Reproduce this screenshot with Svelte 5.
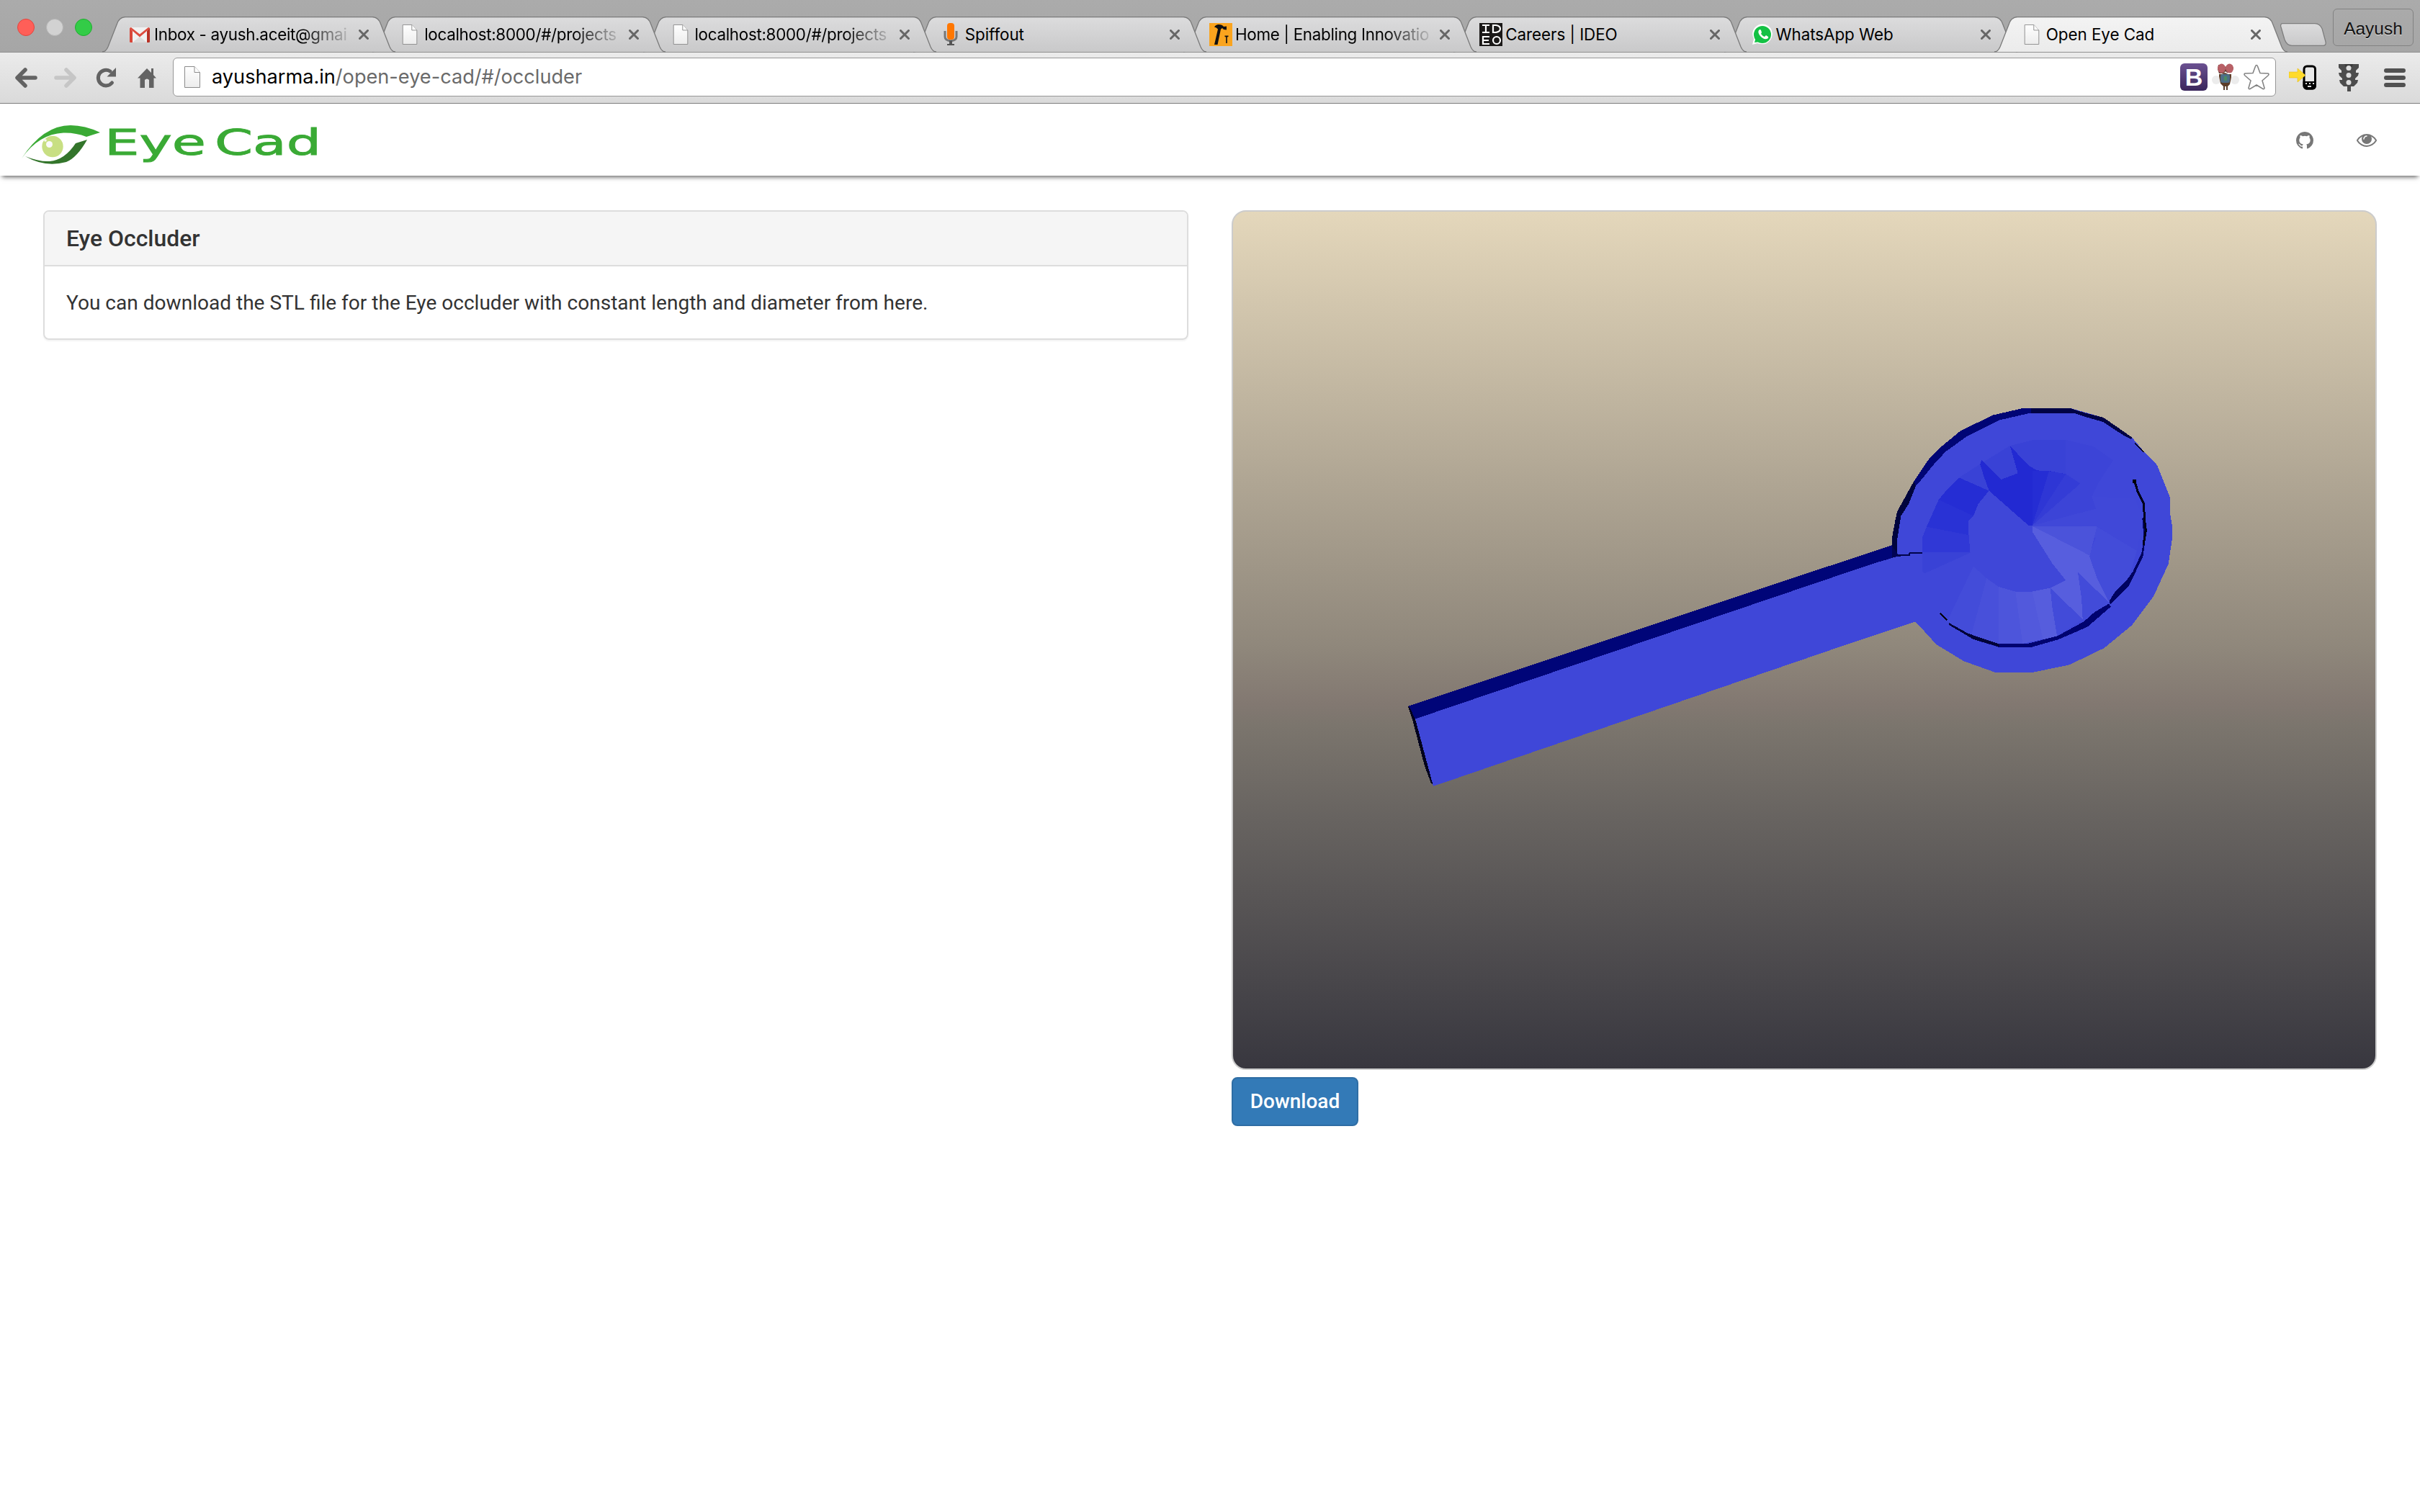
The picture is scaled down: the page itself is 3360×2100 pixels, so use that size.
<script>
  const tabs = [
    { icon: 'gmail', title: 'Inbox - ayush.aceit@gmai', faded: true },
    { icon: 'file', title: 'localhost:8000/#/projects', faded: true },
    { icon: 'file', title: 'localhost:8000/#/projects', faded: true },
    { icon: 'mic', title: 'Spiffout' },
    { icon: 'hammer', title: 'Home | Enabling Innovatio', faded: true },
    { icon: 'ideo', title: 'Careers | IDEO' },
    { icon: 'whatsapp', title: 'WhatsApp Web' },
    { icon: 'file', title: 'Open Eye Cad', active: true }
  ];
</script>

{#snippet fileIcon()}
  <svg class="file" viewBox="0 0 22 30">
    <path d="M.5.5h13.5l7.5 8v21H.5z" fill="url(#paper)" stroke="#8b8b8b" />
    <path d="M14 .5v8h7.5" fill="#fff" stroke="#8b8b8b" />
  </svg>
{/snippet}

{#snippet favicon(name)}
  {#if name === 'gmail'}
    <svg viewBox="0 0 32 32">
      <path d="M2 6h28v21H2z" fill="#f1f1f1" />
      <path d="M6 27l10-8 10 8z" fill="#dcdcdc" />
      <path d="M2 7.500q0-1.500 2-1.500l12 9.500L28 6q2 0 2 1.500L16 19.500z" fill="#dd4b3e" />
      <path d="M2 7l4 4v16H3q-1 0-1-1z" fill="#d8473a" />
      <path d="M30 7l-4 4v16h3q1 0 1-1z" fill="#b93226" />
    </svg>
  {:else if name === 'mic'}
    <svg viewBox="0 0 32 32">
      <path d="M8 11v8q0 5 8 6 8-1 8-6v-8" fill="none" stroke="#777" stroke-width="3" />
      <rect x="11" y="0" width="10" height="23" rx="4" fill="#f70" />
      <path d="M14 24h4v5h3v2H11v-2h3z" fill="#555" />
    </svg>
  {:else if name === 'hammer'}
    <svg viewBox="0 0 32 32">
      <path d="M0 0h32v32H0z" fill="#faa41e" />
      <path d="M7 5.500q2-3.500 6-3.500 5 0 7 3l4-.500v5l-4-.500-2-2-2 1.500-4.500 21.500H7L12 8.500q-2-2.500-5-3zM21.500 17.500h5v1.500l-1.700.500V28h-1.600v-8.500l-1.700-.500z" fill="#111" />
    </svg>
  {:else if name === 'ideo'}
    <svg viewBox="0 0 32 32">
      <path d="M0 0h32v32H0z" fill="#1b1918" />
      <g fill="none" stroke="#fff" stroke-width="2.200">
        <path d="M4 3h10M4 13h10M9 3v10M19 3h4q6 1 6 5t-6 5h-4zM14 19H5v10h9M5 24h8" />
        <circle cx="24" cy="24" r="5" />
      </g>
    </svg>
  {:else if name === 'whatsapp'}
    <svg viewBox="0 0 32 32">
      <path d="M3 30l2-8Q1 13 6 7q6-7 15-5 9 3 10 13-1 10-10 14-6 1-11-1z" fill="#fff" />
      <circle cx="17" cy="16" r="12" fill="#13c144" />
      <path d="M6 27l2-7 6 6z" fill="#13c144" />
      <path d="M12 10q2-2 3 0l1 3-1 2q2 3 5 4l2-2 3 2q1 2-2 3-5 1-9-4-4-5-2-8z" fill="#fff" />
    </svg>
  {:else}
    {@render fileIcon()}
  {/if}
{/snippet}

<svg class="defs" width="0" height="0">
  <defs>
    <linearGradient id="paper" x2="0" y2="1"><stop stop-color="#fff" /><stop offset="1" stop-color="#ececec" /></linearGradient>
    <linearGradient id="tabFill" x2="0" y2="1"><stop stop-color="#dcdcdd" /><stop offset="1" stop-color="#c9c9ca" /></linearGradient>
    <linearGradient id="activeFill" x2="0" y2="1"><stop stop-color="#f3f3f3" /><stop offset="1" stop-color="#ebebeb" /></linearGradient>
  </defs>
</svg>

<div class="browser">
  <div class="strip">
    <div class="lights"><i class="red"></i><i class="grey"></i><i class="green"></i></div>
    <div class="tabs">
      {#each tabs as tab, i}
        <div class="tab" style="z-index: {tab.active ? 20 : 10 - i}">
          <svg class="shape" viewBox="0 0 407 50">
            <path d="M0 49q5 0 8-7L20.500 10Q23.500 1 32 .500H375q8.500.500 11.500 9.500L399 42q3 7 8 7z" fill={tab.active ? 'url(#activeFill)' : 'url(#tabFill)'} />
            <path d="M0 49q5 0 8-7L20.500 10Q23.500 1 32 .500H375q8.500.500 11.500 9.500L399 42q3 7 8 7" fill="none" stroke="#7a7a7a" stroke-width="1.300" />
          </svg>
          <span class="fav">{@render favicon(tab.icon)}</span>
          <span class="title" class:faded={tab.faded}>{tab.title}</span>
          <svg class="close" viewBox="0 0 14 14"><path d="M1.500 1.500l11 11M12.500 1.500l-11 11" stroke="#666" stroke-width="3" stroke-linecap="round" /></svg>
        </div>
      {/each}
    </div>
    <svg class="newtab" viewBox="0 0 64 32">
      <path d="M3 .700H48q7 .300 10 7L63 26q1 5-3 5.300H16Q9 31 6 23L.800 5Q0 1 3 .700z" fill="url(#tabFill)" stroke="#7d7d7d" stroke-width="1.300" />
    </svg>
    <div class="profile">Aayush</div>
  </div>

  <div class="toolbar">
    <div class="nav">
      <svg class="arrow" viewBox="0 0 32 28"><path d="M29 14H5M15 3L4 14l11 11" fill="none" stroke="#636363" stroke-width="5.500" stroke-linecap="round" stroke-linejoin="round" /></svg>
      <svg class="arrow" viewBox="0 0 32 28"><path d="M3 14h24M17 3l11 11-11 11" fill="none" stroke="#c6c6c6" stroke-width="5.500" stroke-linecap="round" stroke-linejoin="round" /></svg>
      <svg class="reload" viewBox="0 0 28 28"><path d="M22.500 21A10.800 10.800 0 1 1 20 5" fill="none" stroke="#636363" stroke-width="5" stroke-linecap="round" /><path d="M28 0v12.500H15.500z" fill="#636363" /></svg>
      <svg class="home" viewBox="0 0 26 28"><path d="M13 1l6 6V1h3v9l4 4.500h-3.500V28H16V17q-3-3-6 0v11H3.500V14.500H0z" fill="#636363" /></svg>
    </div>
    <div class="omnibox">
      {@render fileIcon()}
      <span class="url"><b>ayusharma.in</b>/open-eye-cad/#/occluder</span>
      <div class="actions">
        <div class="bootstrap">B</div>
        <svg class="bug" viewBox="0 0 38 38">
          <circle cx="6" cy="23" r="6" fill="#ececec" /><circle cx="32" cy="23" r="6" fill="#ececec" />
          <path d="M10 15h4l4-2 5 2h4v4l-2 10-3 3h-6l-4-4-2-10z" fill="#5c3d29" />
          <rect x="12" y="15" width="13" height="12" rx="3" fill="#4d6e86" />
          <path d="M17 18h4v6h-4z" fill="#4c8b62" />
          <path d="M9 2h7l3 3 3-3h6l2 5-3 6h-6l-2-2-3 3h-6L8 8z" fill="#5b3528" />
          <ellipse cx="13.500" cy="7" rx="5.500" ry="6.500" fill="#b86066" /><ellipse cx="24.500" cy="7" rx="5.500" ry="6.500" fill="#b86066" />
          <path d="M17 32v5M21 32v5" stroke="#57402f" stroke-width="2" />
        </svg>
        <svg class="star" viewBox="0 0 36 36"><path d="M18 1.500q1 0 1.500 1.500l3.500 9.500 11 .500q2 1 0 3l-8 7 3 10q0 2-2 1.500L18 29l-9 5.500q-2 .500-2-1.500l3-10-8-7q-2-2 0-3l11-.500L16.500 3q.500-1.500 1.500-1.500z" fill="#fff" stroke="#848484" stroke-width="1.600" /></svg>
      </div>
    </div>
    <div class="extensions">
      <svg class="ext" viewBox="0 0 38 38">
        <rect x="21" y="3" width="15.500" height="31" rx="4" fill="#e8e8e8" stroke="#000" stroke-width="3" />
        <path d="M19.500 24H38v7q-1 4-5 4.500h-9q-4-1-4.500-5z" fill="#000" />
        <path d="M23 27h2M28 27h2M33 27h2M26 31h5" stroke="#ddd" stroke-width="2" />
        <path d="M0 11h12V6l11 9.500L12 25v-6H0z" fill="#ffdb2c" stroke="#e5bd15" stroke-width=".600" />
      </svg>
      <svg class="ext" viewBox="0 0 38 38">
        <path d="M5 0h28v5l-4 4v3h4l-1 4-4 4v2h4l-1 4-5 5h-4v7h-5v-7h-5l-5-5-1-4h4v-2l-4-4-1-4h4V9L5 5z" fill="#4c4c4c" />
        <path d="M13 0h12v1l-2 3h-8z" fill="#3a3a3a" />
        <circle cx="19" cy="5.500" r="3.500" fill="#ddd" /><circle cx="19" cy="15.500" r="3.500" fill="#ddd" /><circle cx="19" cy="25.500" r="3.500" fill="#ddd" />
      </svg>
      <svg class="menu" viewBox="0 0 30 26"><path d="M3 3h24M3 13h24M3 23h24" stroke="#515151" stroke-width="6" stroke-linecap="round" /></svg>
    </div>
  </div>
</div>

<header>
  <svg class="logo" viewBox="30 170 420 60">
    <path d="M30 220Q60 174 98 174q20 0 41 10l-19 6q-15-6-32-5.500Q54 186 30 220z" fill="#3aaa35" />
    <path d="M35 217q20 8 34 7 21-2 36-25l16-5q-14 25-29 31-30 8-57-8z" fill="#33752b" />
    <circle cx="73" cy="203.500" r="14.700" fill="#c8df83" />
    <circle cx="68.500" cy="200.500" r="4.500" fill="#fafafa" /><circle cx="63" cy="195" r="1.800" fill="#fafafa" />
    <text x="145" y="214.500" textLength="141" lengthAdjust="spacingAndGlyphs">Eye</text>
    <text x="298" y="214.500" textLength="148" lengthAdjust="spacingAndGlyphs">Cad</text>
  </svg>
  <nav>
    <svg class="github" viewBox="128 128 1536 1536"><path d="M896 128q209 0 385.500 103t279.500 279.500 103 385.500q0 251-146.500 451.500t-378.500 277.500q-27 5-40-7t-13-30q0-3 .500-76.500t.500-134.500q0-97-52-142 57-6 102.500-18t94-39 81-66.500 53-105 20.500-150.500q0-119-79-206 37-91-8-204-28-9-81 11t-92 44l-38 24q-93-26-192-26t-192 26q-16-11-42.500-27t-83.500-38.500-85-13.500q-45 113-8 204-79 87-79 206 0 85 20.500 150t52.500 105 80.500 67 94 39 102.500 18q-39 36-49 103-21 10-45 15t-57 5-65.500-21.500-55.500-62.500q-19-32-48.500-52t-49.500-24l-20-3q-21 0-29 4.500t-5 11.500 9 14 13 12l7 5q22 10 43.500 38t31.500 51l10 23q13 38 44 61.500t67 30 69.500 7 55.500-3.500l23-4q0 38 .500 88.500t.500 54.500q0 18-13 30t-40 7q-232-77-378.500-277.500t-146.500-451.500q0-209 103-385.500t279.500-279.500 385.500-103z" /></svg>
    <svg class="eye" viewBox="0 384 1792 1152"><path d="M1664 960q-152-236-381-353 61 104 61 225 0 185-131.500 316.500t-316.500 131.500-316.500-131.500-131.500-316.500q0-121 61-225-229 117-381 353 133 205 333.500 326.500t434.500 121.500 434.500-121.500 333.500-326.500zm-720-384q0-20-14-34t-34-14q-125 0-214.500 89.500t-89.500 214.500q0 20 14 34t34 14 34-14 14-34q0-86 61-147t147-61q20 0 34-14t14-34zm848 384q0 34-20 69-140 230-376.500 368.500t-499.500 138.500-499.500-139-376.500-368q-20-35-20-69t20-69q140-229 376.500-368t499.500-139 499.500 139 376.500 368q20 35 20 69z" /></svg>
  </nav>
</header>

<main>
  <section class="panel">
    <h3>Eye Occluder</h3>
    <p>You can download the STL file for the Eye occluder with constant length and diameter from here.</p>
  </section>
  <section class="view">
    <svg class="scene" viewBox="1712 294 1586 1190">
      <!-- handle -->
      <path d="M1955 981L2627 757l10 20-672 222z" fill="#000578" />
      <path d="M1955 981l3 3 7 15 26 92-4-3-9-24-9-34-7-27z" fill="#02021c" />
      <path d="M1965 998.500L2600 783l34-10 40 0v85l-15 5.500-99 33-570 195.500z" fill="#3f47d8" />
      <!-- lens disc, drawn in thirds of a unit -->
      <g transform="translate(2560 520) scale(.333333)">
        <path d="M200 712L216 600 222 572 292 445 355 352 410 298 485 236 620 170 750 140H942L1082 180 1200 262 1253 325 1305 378 1330 440 1358 510V575L1367 625V690L1352 790 1320 860 1290 925 1200 1045 1085 1140 940 1210 785 1242H632L500 1195 385 1125 335 1070 297 1030 200 760z" fill="#3f47d8" />
        <path d="M200 755V685L216 600 222 572 292 445 355 352 410 298 485 236 620 170 750 140H850V162H772L650 190 510 260 424 322 375 375 318 445 300 465 270 540 238 590 222 690V755z" fill="#000575" />
        <path d="M200 755V685L216 600 222 572 292 445 300 465 270 540 238 590 222 690V755z" fill="#00043d" />
        <path d="M780 140H942L985 155 1082 180 1200 262 1198 270 1165 254 1080 198 1010 178 960 162H780z" fill="#000345" />
        <path d="M1210 280L1253 325H1246L1212 288z" fill="#000012" />
        <path d="M218 755L272 752 275 745H333" fill="none" stroke="#00044a" stroke-width="7" />
        <path d="M200 712V765L230 757z" fill="#000355" />
        <!-- inner cone facets -->
        <path d="M480 430L570 372 692 297 790 273H925L1040 300 1122 358 1062 450 1033 510 1050 560 785 630 605 485z" fill="#3942d6" />
        <path d="M925 273L1040 300 1122 358 1062 450 1033 510 1050 560 785 630 980 455 925 415z" fill="#3c44d7" />
        <path d="M692 297L770 380 805 400 860 403 925 415 985 455 785 630 770 630 605 485 585 430 568 375 573 357 655 438 725 412z" fill="#2229d2" />
        <path d="M855 403L925 415 985 455 785 630z" fill="#2e36d5" />
        <path d="M785 402L855 403 785 630z" fill="#252dd4" />
        <path d="M925 415L985 455 785 630z" fill="#343cd6" />
        <path d="M480 430L605 485 560 540 540 590 395 522 430 480z" fill="#252dd4" />
        <path d="M395 522L540 590 520 610V670L345 635z" fill="#2932d5" />
        <path d="M345 635L522 670 525 740H327V680z" fill="#3038d6" />
        <path d="M327 742H530L335 830 327 822z" fill="#3942d6" />
        <path d="M540 800L595 850 530 1090 430 1030z" fill="#434cd9" />
        <path d="M595 850L645 885V1125L530 1090z" fill="#4850da" />
        <path d="M645 885L715 905 745 1122H645z" fill="#4d55db" />
        <path d="M715 905H785L860 890 868 970 888 1090 745 1122z" fill="#5259dc" />
        <path d="M785 905L860 890 868 970 888 1090 830 1105z" fill="#565ddd" />
        <path d="M860 890L925 858 870 790 785 655V632L1025 750 1060 860 1105 950 975 825 990 930 995 1020z" fill="#575ede" />
        <path d="M790 632H1050L1220 735 1190 840 1105 950 1055 850 1022 755 1050 680z" fill="#434cd9" />
        <path d="M975 825L1105 950 1005 1030 995 1020 990 930z" fill="#424bd9" />
        <path d="M860 890L995 1020 888 1090 868 970z" fill="#424bd9" />
        <path d="M785 632H1055L1040 690 1025 755z" fill="#4b53da" />
        <path d="M785 630L1050 560 1033 508 1210 518 1250 600 1220 735 1055 632z" fill="#4048d8" />
        <!-- inner rim -->
        <path d="M402 995L430 1025" stroke="#00000c" stroke-width="7" />
        <path d="M438 1035L515 1078 570 1098 645 1122H765L890 1090 1000 1030 1045 990 1105 955 1112 968 1015 1052 895 1104 780 1137H648L540 1104 440 1045z" fill="#000370" />
        <path d="M438 1035L515 1078 570 1098 645 1122 648 1135 540 1104 440 1045z" fill="#000338" />
        <path d="M1105 945L1130 905 1180 855 1205 820 1240 745 1250 680 1243 600 1255 595 1262 650 1246 760 1212 830 1188 880 1110 958z" fill="#000360" />
        <path d="M1210 440L1225 490 1250 540 1252 600 1258 650 1248 710" fill="none" stroke="#00021c" stroke-width="9" />
        <path d="M1203 438h14v14h-14z" fill="#000" />
      </g>
    </svg>
    <button>Download</button>
  </section>
</main>

<style>
  :global(body) {
    background: #fff;
    color: #333;
    font-family: Roboto, "Liberation Sans", sans-serif;
    font-size: 28px;
  }
  svg { display: block; flex: none; }
  .defs { position: absolute; }
  .browser { height: 144px; }
  .strip {
    box-sizing: border-box;
    display: flex;
    height: 72px;
    padding: 0 8px 0 24px;
    background: linear-gradient(#ababab, #a6a6a6);
  }
  .lights { display: flex; gap: 16px; padding-top: 26px; width: 134px; flex: none; }
  .lights i { box-sizing: border-box; width: 24px; height: 24px; border-radius: 50%; }
  .red { background: #ff5f58; border: 1px solid #e2463f; }
  .grey { background: #d2d2d2; border: 1px solid #b6b6b6; }
  .green { background: #33cc47; border: 1px solid #1fad30; }
  .tabs { display: flex; position: relative; z-index: 2; width: 3002px; height: 73px; padding-top: 23px; box-sizing: border-box; flex: none; }
  .tab {
    position: relative;
    display: flex;
    align-items: center;
    flex: 1 1 0;
    min-width: 0;
    height: 50px;
    padding-left: 20px;
  }
  .shape { position: absolute; left: -16px; top: 0; width: 407px; height: 50px; }
  .fav { position: relative; display: flex; justify-content: center; align-items: center; width: 32px; height: 32px; flex: none; }
  .fav > svg { width: 32px; height: 32px; }
  .fav > .file { width: 22px; height: 28px; }
  .file { width: 22px; height: 30px; }
  .title {
    position: relative;
    width: 275px;
    flex: none;
    margin-left: 4px;
    white-space: nowrap;
    color: #000;
    font: 22.400px/32px Inter, "Liberation Sans", sans-serif;
    letter-spacing: -.05px;
  }
  .faded {
    letter-spacing: -.3px;
    -webkit-mask-image: linear-gradient(90deg, #000 205px, transparent 278px);
    mask-image: linear-gradient(90deg, #000 205px, transparent 278px);
  }
  .close { position: relative; width: 14px; height: 14px; margin-left: 9px; }
  .newtab { width: 64px; height: 32px; margin: 32px 0 0 6px; }
  .profile {
    box-sizing: border-box;
    width: 112px;
    height: 52px;
    margin: 12px 1px 0 auto;
    border: 1px solid #828282;
    border-radius: 6px;
    color: #111;
    text-align: center;
    font: 24.500px/54px "Liberation Sans", sans-serif;
    text-shadow: 0 1px 0 #ddd;
  }
  .toolbar {
    box-sizing: border-box;
    display: flex;
    align-items: flex-start;
    height: 72px;
    padding: 8px 20px 0 20px;
    border-top: 1px solid #909090;
    border-bottom: 1px solid #7d7d7d;
    background: linear-gradient(#ebebeb, #dadada);
  }
  .nav { display: flex; align-items: center; width: 220px; height: 53px; }
  .arrow { width: 32px; height: 28px; margin-right: 23px; }
  .reload { width: 28px; height: 28px; margin: 0 30px 0 3px; }
  .home { width: 26px; height: 28px; }
  .omnibox {
    box-sizing: border-box;
    display: flex;
    align-items: center;
    width: 2920px;
    height: 54px;
    padding: 0 8px 0 15px;
    margin-top: -1px;
    background: #fff;
    border: 1px solid #979797;
    border-radius: 6px;
  }
  .url { margin-left: 16px; color: #6a6a6a; font: 27.150px/52px Inter, "Liberation Sans", sans-serif; white-space: nowrap; }
  .url b { color: #000; font-weight: 400; }
  .actions { display: flex; align-items: center; gap: 6px; margin-left: auto; }
  .bootstrap {
    width: 38px;
    height: 38px;
    border-radius: 6px;
    background: linear-gradient(#6b5191, #3a265c);
    color: #fff;
    text-align: center;
    font: bold 34px/38px "Liberation Sans", sans-serif;
  }
  .bug { width: 38px; height: 38px; }
  .star { width: 36px; height: 36px; }
  .extensions { display: flex; align-items: center; height: 53px; margin-left: 18px; }
  .ext { width: 38px; height: 38px; margin-right: 26px; }
  .ext + .ext { margin-right: 30px; }
  .menu { width: 30px; height: 26px; }
  header {
    box-sizing: border-box;
    display: flex;
    justify-content: space-between;
    height: 100px;
    padding: 26px 60px 0 30px;
    background: #fff;
    box-shadow: 0 5px 6px -3px #666;
  }
  .logo { width: 420px; height: 60px; }
  .logo text { fill: #3aaa35; stroke: #3aaa35; stroke-width: .9; font: 49.500px "DejaVu Sans", sans-serif; }
  nav { display: flex; align-items: center; gap: 60px; height: 50px; fill: #777; }
  .github { width: 24px; height: 24px; }
  .eye { width: 28px; height: 18px; }
  main { display: flex; align-items: flex-start; gap: 60px; padding: 48px 60px 0; }
  .panel {
    box-sizing: border-box;
    width: 1590px;
    height: 180px;
    border: 2px solid #ddd;
    border-radius: 8px;
    box-shadow: 0 2px 2px rgba(0, 0, 0, .05);
    overflow: hidden;
  }
  h3 {
    margin: 0;
    height: 74px;
    padding-left: 30px;
    border-bottom: 2px solid #ddd;
    background: #f5f5f5;
    font: 500 31.900px/74px Roboto, sans-serif;
  }
  p { margin: 30px; font-size: 28.050px; line-height: 41px; }
  .view { width: 1590px; }
  .scene {
    box-sizing: border-box;
    width: 1590px;
    height: 1194px;
    border: 2px solid #ccc;
    border-radius: 20px;
    background: linear-gradient(#e4d7bb, #8f877b 51%, #827871 57.500%, #7b756d 60%, #676360 71%, #38373f);
    shape-rendering: crispEdges;
  }
  button {
    display: block;
    box-sizing: border-box;
    width: 176px;
    height: 68px;
    margin: 10px 0 0;
    padding: 0;
    border: 2px solid #2e6da4;
    border-radius: 8px;
    background: #337ab7;
    color: #fff;
    font: 500 28px/64px Roboto, sans-serif;
  }
</style>
